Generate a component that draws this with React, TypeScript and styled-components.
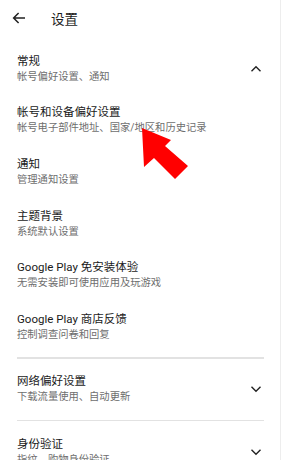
import React from "react";
import styled, { createGlobalStyle } from "styled-components";

const Global = createGlobalStyle`
  html, body {
    margin: 0;
    padding: 0;
    background: #fff;
  }
  body {
    font-family: Roboto, "Noto Sans CJK SC", sans-serif;
    -webkit-font-smoothing: antialiased;
  }
`;

type Item = { title: string; sub: string };

const general: Item[] = [
  { title: "帐号和设备偏好设置", sub: "帐号电子部件地址、国家/地区和历史记录" },
  { title: "通知", sub: "管理通知设置" },
  { title: "主题背景", sub: "系统默认设置" },
  { title: "Google Play 免安装体验", sub: "无需安装即可使用应用及玩游戏" },
  { title: "Google Play 商店反馈", sub: "控制调查问卷和回复" },
];

const Chevron = ({ up }: { up?: boolean }) => (
  <ChevronSvg width="12" height="12" viewBox="0 0 12 12">
    <polyline
      points={up ? "1.5,8.3 6,3.8 10.5,8.3" : "1.5,3.8 6,8.3 10.5,3.8"}
      fill="none"
      stroke="#222"
      strokeWidth="1.4"
    />
  </ChevronSvg>
);

const Row = ({ title, sub, arrow }: Item & { arrow?: "up" | "down" }) => (
  <RowBox>
    <Texts>
      <Title>{title}</Title>
      <Sub>{sub}</Sub>
    </Texts>
    {arrow && <Chevron up={arrow === "up"} />}
  </RowBox>
);

export default function App() {
  return (
    <Page>
      <Global />
      <Header>
        <BackSvg width="14" height="14" viewBox="0 0 14 14">
          <path d="M13 7H1.6M6.6 2 1.6 7l5 5" fill="none" stroke="#222" strokeWidth="1.5" />
        </BackSvg>
        <HeadTitle>设置</HeadTitle>
      </Header>
      <Section>
        <Row title="常规" sub="帐号偏好设置、通知" arrow="up" />
        {general.map((it) => (
          <Row key={it.title} {...it} />
        ))}
      </Section>
      <Divider />
      <Section>
        <Row title="网络偏好设置" sub="下载流量使用、自动更新" arrow="down" />
      </Section>
      <Divider />
      <Section>
        <Row title="身份验证" sub="指纹、购物身份验证" arrow="down" />
      </Section>
      <Pointer width="60" height="60" viewBox="0 0 60 60">
        <polygon points="2,1 31,13 25,19 48,39 35,52 14,31 4,40" fill="#ff0000" />
      </Pointer>
    </Page>
  );
}

const Page = styled.div`
  position: relative;
  width: 280px;
  height: 460px;
  overflow: hidden;
  border-right: 1px solid #ededed;
  background: #fff;
`;

const Header = styled.div`
  height: 36px;
  display: flex;
  align-items: center;
  padding-left: 12px;
  margin-bottom: 7px;
`;

const BackSvg = styled.svg`
  display: block;
  margin-right: 25px;
`;

const HeadTitle = styled.div`
  font-family: "Noto Sans CJK SC", sans-serif;
  font-size: 13.5px;
  color: #1c1c1c;
  line-height: 18px;
`;

const Section = styled.div`
  padding: 0;
`;

const RowBox = styled.div`
  height: 51.6px;
  box-sizing: border-box;
  padding: 9.8px 17px;
  display: flex;
  align-items: center;
  justify-content: space-between;
`;

const Texts = styled.div`
  display: flex;
  flex-direction: column;
`;

const Title = styled.div`
  font-size: 11.5px;
  line-height: 16px;
  color: #1a1a1a;
  white-space: nowrap;
`;

const Sub = styled.div`
  font-size: 10.3px;
  line-height: 16px;
  color: #6e6e6e;
  white-space: nowrap;
`;

const ChevronSvg = styled.svg`
  display: block;
  margin-right: 1px;
`;

const Divider = styled.div`
  height: 1.5px;
  background: #e2e2e2;
  margin: 4.5px 16px 5px 17px;
`;

const Pointer = styled.svg`
  position: absolute;
  left: 140px;
  top: 127px;
`;
